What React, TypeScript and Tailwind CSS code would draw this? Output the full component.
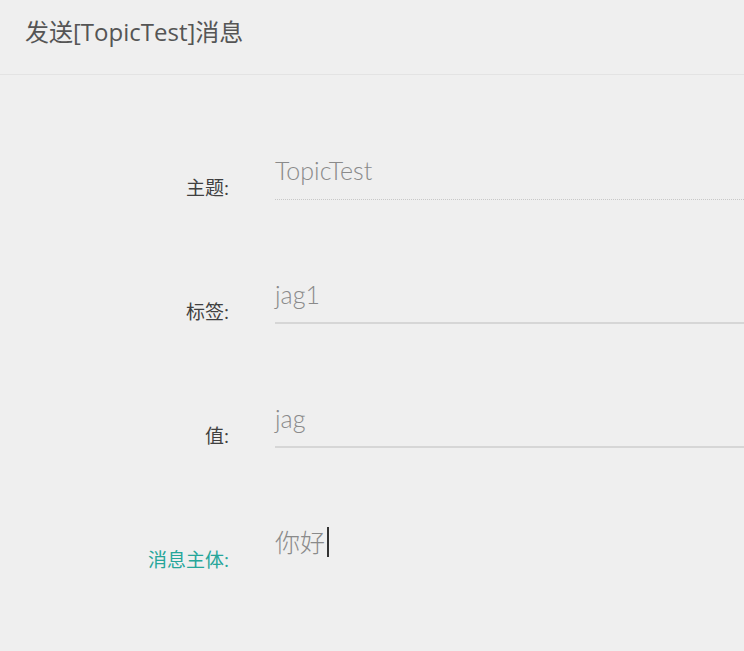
import React from "react";

const FONT = {
  fontFamily: '"Open Sans", "Noto Sans CJK SC", sans-serif',
};

const INPUT_FONT = {
  fontFamily: 'Lato, "Noto Sans CJK SC", sans-serif',
};

interface FieldRowProps {
  label: string;
  value: string;
  dotted?: boolean;
  active?: boolean;
}

function FieldRow({ label, value, dotted, active }: Readonly<FieldRowProps>) {
  return (
    <div className="flex items-end h-[124px]">
      <div
        className={`w-[229px] shrink-0 text-right text-[19px] leading-[24px] ${
          active ? "text-[#26a69a]" : "text-[#404040]"
        }`}
      >
        {label}:
      </div>
      <div
        className={`ml-[46px] flex-1 h-[50px] flex items-start ${
          active
            ? ""
            : dotted
            ? "border-b border-dotted border-[#c8c8c8]"
            : "border-b-2 border-[#d6d6d6]"
        }`}
      >
        <span
          className="text-[25px] font-light leading-[30px] text-[#8a8a8a] pt-[5px] flex items-center"
          style={INPUT_FONT}
        >
          {value}
          {active && <span className="inline-block w-[1.5px] h-[30px] bg-[#333] ml-[2px]" />}
        </span>
      </div>
    </div>
  );
}

export default function App() {
  return (
    <div className="w-[744px] h-[651px] bg-[#efefef] overflow-hidden" style={FONT}>
      <div className="h-[75px] border-b border-[#e3e3e3] px-[25px] flex items-center">
        <h1 className="text-[24px] text-[#555] pb-[11px]">发送[TopicTest]消息</h1>
      </div>
      <div className="pt-[1px]">
        <FieldRow label="主题" value="TopicTest" dotted />
        <FieldRow label="标签" value="jag1" />
        <FieldRow label="值" value="jag" />
        <FieldRow label="消息主体" value="你好" active />
      </div>
    </div>
  );
}
